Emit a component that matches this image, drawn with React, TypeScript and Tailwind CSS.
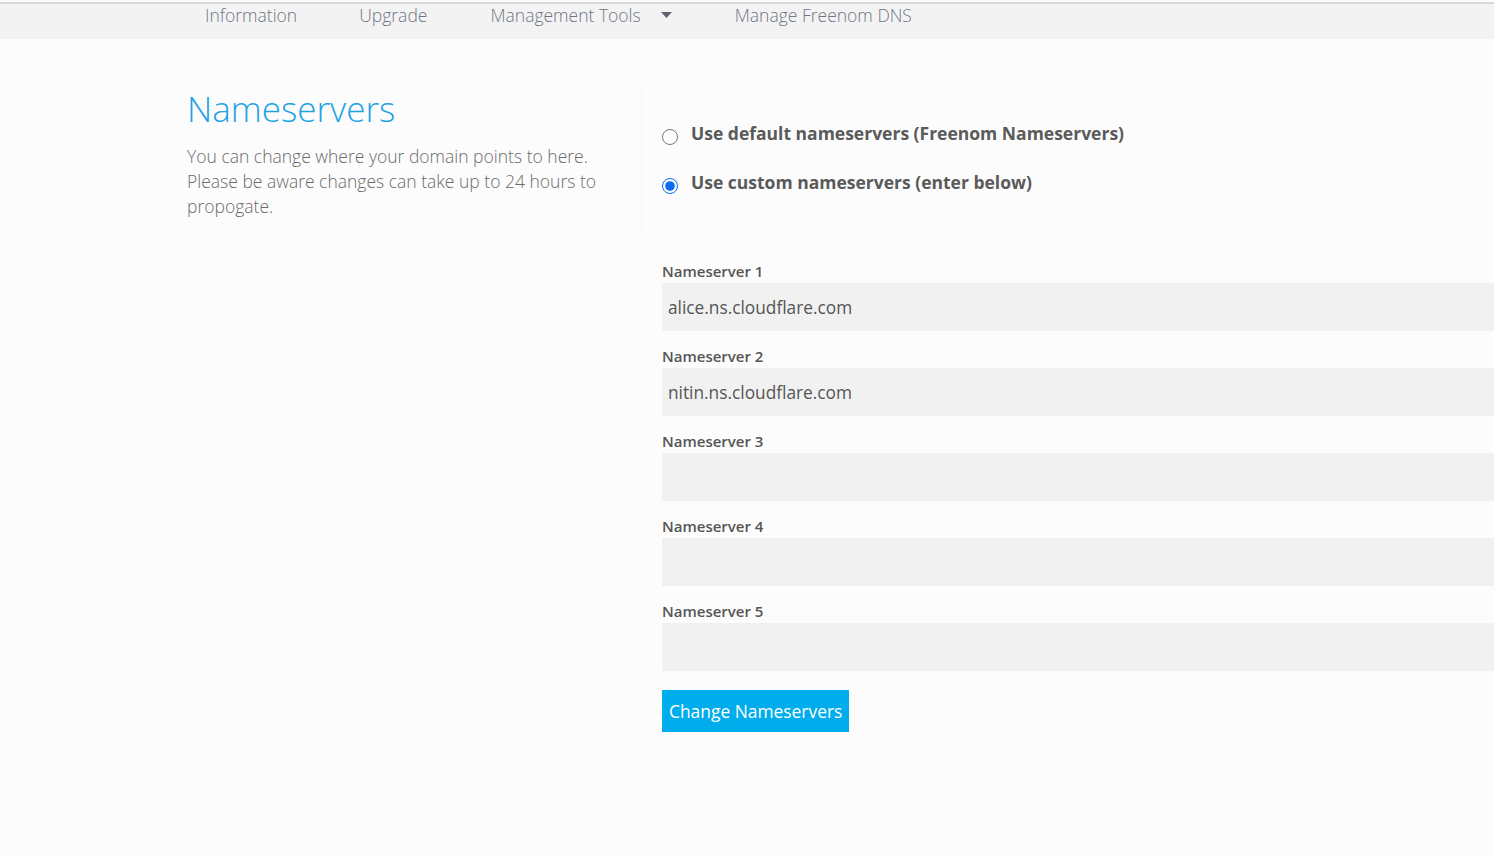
export default function App() {
  const servers = ["alice.ns.cloudflare.com", "nitin.ns.cloudflare.com", "", "", ""];
  return (
    <div className="min-h-[856px] overflow-hidden bg-[#fcfcfc] font-['Open_Sans',sans-serif]">
      <div className="h-[2px] bg-[#fcfcfc]" />
      <div className="h-[2px] bg-[#d4d8dc]" />
      <nav className="flex h-[35px] items-start bg-[#f3f3f3] text-[17.5px] font-light text-[#6f7785]">
        <span className="ml-[205px] leading-[22px]">Information</span>
        <span className="ml-[62px] leading-[22px]">Upgrade</span>
        <span className="ml-[63px] flex items-center leading-[22px]">
          Management Tools
          <svg className="ml-[20px]" width="11" height="6" viewBox="0 0 11 6">
            <path d="M0 0h11L5.5 6z" fill="#5f6670" />
          </svg>
        </span>
        <span className="ml-[63px] leading-[22px]">Manage Freenom DNS</span>
      </nav>
      <div className="flex pt-[51px]">
        <div className="ml-[187px] h-[145px] w-[455px] self-start border-r border-dotted border-[#ececec]">
          <h1 className="-mt-[3px] text-[35px] font-light leading-[44px] text-[#1fa3e4]">Nameservers</h1>
          <p className="mt-[13px] w-[430px] text-[17.5px] font-light leading-[25px] text-[#6b6b6b]">
            You can change where your domain points to here. Please be aware changes can take up to 24 hours to propogate.
          </p>
        </div>
        <div className="ml-[20px] flex-1">
          <div className="pt-[31px]">
            <label className="flex items-start">
              <input type="radio" name="ns" className="mt-[8px] h-[16px] w-[16px]" />
              <span className="ml-[13px] text-[17.5px] font-bold leading-[24px] text-[#5a5a5a]">
                Use default nameservers (Freenom Nameservers)
              </span>
            </label>
            <label className="mt-[25px] flex items-start">
              <input type="radio" name="ns" defaultChecked className="mt-[8px] h-[16px] w-[16px] accent-[#0a6cf5]" />
              <span className="ml-[13px] text-[17.5px] font-bold leading-[24px] text-[#5a5a5a]">
                Use custom nameservers (enter below)
              </span>
            </label>
          </div>
          <div className="mt-[66px] flex flex-col">
            {servers.map((v, i) => (
              <div key={i} className="mb-[14px]">
                <div className="text-[15px] font-semibold leading-[22px] text-[#555]">Nameserver {i + 1}</div>
                <input
                  defaultValue={v}
                  className="mt-[1px] h-[48px] w-full bg-[#f1f1f1] px-[6px] text-[17.3px] text-[#555] outline-none"
                />
              </div>
            ))}
          </div>
          <button className="mt-[5px] h-[42px] bg-[#00adec] px-[7px] text-[17.4px] text-white">Change Nameservers</button>
        </div>
      </div>
    </div>
  );
}
